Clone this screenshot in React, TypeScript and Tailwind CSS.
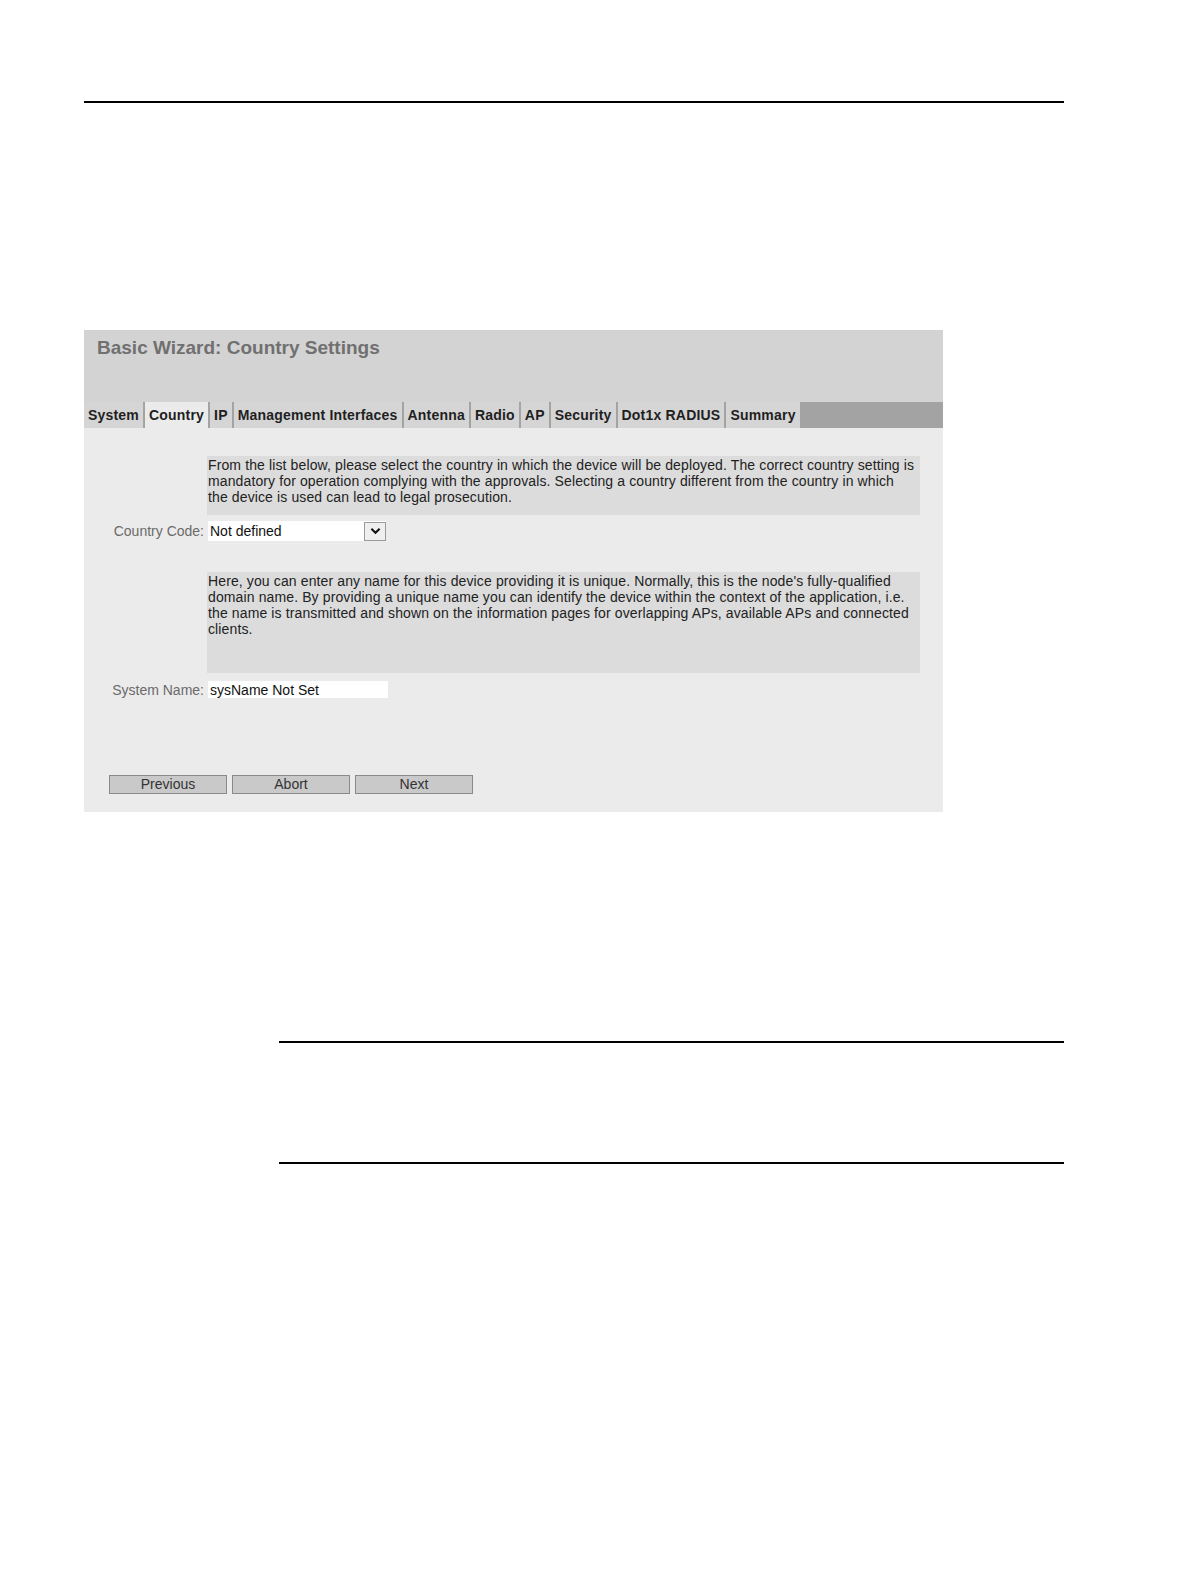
import React from "react";

const tabs = [
  "System",
  "Country",
  "IP",
  "Management Interfaces",
  "Antenna",
  "Radio",
  "AP",
  "Security",
  "Dot1x RADIUS",
  "Summary",
];

const font = { fontFamily: '"Liberation Sans", Arial, sans-serif' };

function WizardButton({ label }: { label: string }) {
  return (
    <button
      className="h-[19px] w-[118px] border border-[#8a8a8a] bg-[#c9c9c9] text-[14px] leading-[17px] text-[#333]"
      type="button"
    >
      {label}
    </button>
  );
}

export default function App() {
  return (
    <div className="h-[1587px] w-full overflow-hidden bg-white" style={font}>
      <div className="pt-[101px]">
        <div className="ml-[84px] h-[2px] w-[980px] bg-black" />
      </div>

      <div className="ml-[84px] mt-[227px] w-[859px] bg-[#ebebeb]">
        <div className="h-[72px] bg-[#d3d3d3] pl-[13px] pt-[7px]">
          <h1 className="text-[19px] font-bold leading-[22px] text-[#707070]">
            Basic Wizard: Country Settings
          </h1>
        </div>

        <div className="flex h-[26px] bg-[#a3a3a3]">
          {tabs.map((tab) => {
            const active = tab === "Country";
            return (
              <div
                className={`mr-[2px] flex h-[26px] items-center px-[4px] text-[14px] font-bold tracking-[0.2px] text-[#1f1f1f] ${
                  active ? "bg-[#ebebeb]" : "bg-[#d5d5d5]"
                }`}
                key={tab}
              >
                {tab}
              </div>
            );
          })}
        </div>

        <div className="pb-[18px] pt-[28px]">
          <div className="grid grid-cols-[123px_713px] text-[14px] leading-[16px]">
            <div />
            <div className="h-[59px] bg-[#dcdcdc] pl-[1px] pr-[4px] pt-[1px] tracking-[0.12px] text-[#222]">
              From the list below, please select the country in which the device will be deployed. The correct country
              setting is mandatory for operation complying with the approvals. Selecting a country different from the
              country in which the device is used can lead to legal prosecution.
            </div>

            <div className="flex items-center justify-end pr-[3px] pt-[6px] text-[#6a6a6a]">Country Code:</div>
            <div className="pl-[1px] pt-[6px]">
              <div className="flex h-[20px] w-[178px] items-center bg-white">
                <span className="flex-1 pl-[2px] text-[#111]">Not defined</span>
                <span className="flex h-[19px] w-[22px] items-center justify-center border border-[#9a9a9a] bg-[#efefef]">
                  <svg viewBox="0 0 12 8" className="h-[8px] w-[11px]">
                    <path d="M1.5 1.5 L6 6 L10.5 1.5" fill="none" stroke="#111" strokeWidth="2.2" />
                  </svg>
                </span>
              </div>
            </div>

            <div className="h-[31px]" />
            <div className="h-[31px]" />

            <div />
            <div className="h-[101px] bg-[#dcdcdc] pl-[1px] pr-[4px] pt-[1px] tracking-[0.12px] text-[#222]">
              Here, you can enter any name for this device providing it is unique. Normally, this is the node's
              fully-qualified domain name. By providing a unique name you can identify the device within the context of
              the application, i.e. the name is transmitted and shown on the information pages for overlapping APs,
              available APs and connected clients.
            </div>

            <div className="flex items-center justify-end pr-[3px] pt-[8px] text-[#6a6a6a]">System Name:</div>
            <div className="pl-[1px] pt-[8px]">
              <div className="flex h-[17px] w-[180px] items-center bg-white pl-[2px] text-[#111]">sysName Not Set</div>
            </div>
          </div>

          <div className="ml-[25px] mt-[77px] flex gap-[5px]">
            <WizardButton label="Previous" />
            <WizardButton label="Abort" />
            <WizardButton label="Next" />
          </div>
        </div>
      </div>

      <div className="ml-[279px] mt-[229px] h-[2px] w-[785px] bg-black" />
      <div className="ml-[279px] mt-[119px] h-[2px] w-[785px] bg-black" />
    </div>
  );
}
